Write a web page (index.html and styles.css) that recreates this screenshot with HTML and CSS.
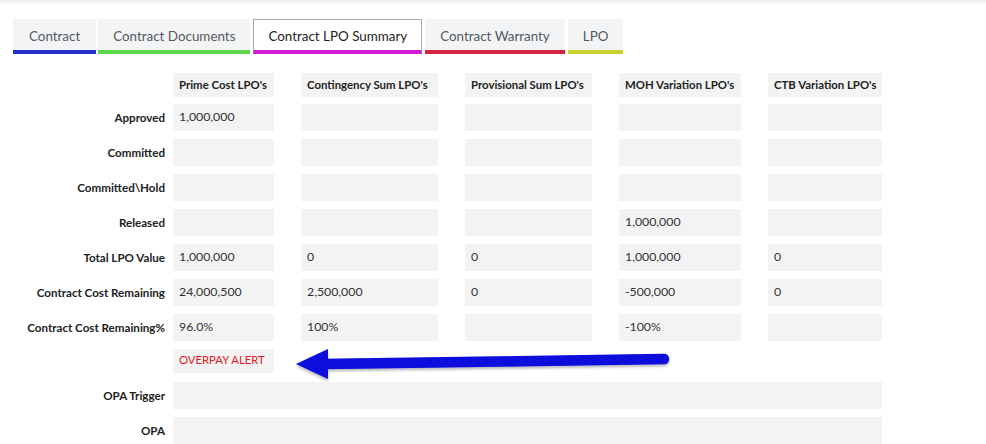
FILE: index.html
```html
<!DOCTYPE html>
<html>
<head>
<meta charset="utf-8">
<link rel="stylesheet" href="styles.css">
</head>
<body>
<div class="topbar"></div>
<nav class="tabs">
  <div class="tab c-blue first">Contract</div>
  <div class="tab c-green">Contract Documents</div>
  <div class="tab active c-magenta">Contract LPO Summary</div>
  <div class="tab c-red">Contract Warranty</div>
  <div class="tab c-yellow">LPO</div>
</nav>

<section class="summary">
  <div class="row head">
    <div class="label"></div>
    <div class="cells">
      <div class="cell h">Prime Cost LPO's</div>
      <div class="cell h">Contingency Sum LPO's</div>
      <div class="cell h">Provisional Sum LPO's</div>
      <div class="cell h">MOH Variation LPO's</div>
      <div class="cell h">CTB Variation LPO's</div>
    </div>
  </div>
  <div class="row">
    <div class="label">Approved</div>
    <div class="cells">
      <div class="cell">1,000,000</div><div class="cell"></div><div class="cell"></div><div class="cell"></div><div class="cell"></div>
    </div>
  </div>
  <div class="row">
    <div class="label">Committed</div>
    <div class="cells">
      <div class="cell"></div><div class="cell"></div><div class="cell"></div><div class="cell"></div><div class="cell"></div>
    </div>
  </div>
  <div class="row">
    <div class="label">Committed\Hold</div>
    <div class="cells">
      <div class="cell"></div><div class="cell"></div><div class="cell"></div><div class="cell"></div><div class="cell"></div>
    </div>
  </div>
  <div class="row">
    <div class="label">Released</div>
    <div class="cells">
      <div class="cell"></div><div class="cell"></div><div class="cell"></div><div class="cell">1,000,000</div><div class="cell"></div>
    </div>
  </div>
  <div class="row">
    <div class="label">Total LPO Value</div>
    <div class="cells">
      <div class="cell">1,000,000</div><div class="cell">0</div><div class="cell">0</div><div class="cell">1,000,000</div><div class="cell">0</div>
    </div>
  </div>
  <div class="row">
    <div class="label">Contract Cost Remaining</div>
    <div class="cells">
      <div class="cell">24,000,500</div><div class="cell">2,500,000</div><div class="cell">0</div><div class="cell">-500,000</div><div class="cell">0</div>
    </div>
  </div>
  <div class="row">
    <div class="label">Contract Cost Remaining%</div>
    <div class="cells">
      <div class="cell">96.0%</div><div class="cell">100%</div><div class="cell"></div><div class="cell">-100%</div><div class="cell"></div>
    </div>
  </div>
  <div class="row alert-row">
    <div class="label"></div>
    <div class="cells">
      <div class="cell alert">OVERPAY ALERT</div>
    </div>
  </div>
  <div class="row">
    <div class="label">OPA Trigger</div>
    <div class="cells">
      <div class="cell wide"></div>
    </div>
  </div>
  <div class="row">
    <div class="label">OPA</div>
    <div class="cells">
      <div class="cell wide"></div>
    </div>
  </div>

  <svg class="arrow" width="400" height="50" viewBox="0 0 400 50">
    <defs>
      <filter id="sh" x="-10%" y="-50%" width="120%" height="200%">
        <feDropShadow dx="0" dy="2" stdDeviation="1.5" flood-color="#000" flood-opacity="0.3"/>
      </filter>
    </defs>
    <g filter="url(#sh)">
      <line x1="364" y1="21" x2="24" y2="26" stroke="#0808dc" stroke-width="10.5" stroke-linecap="round"/>
      <polygon points="-4,26 28,11 28,41" fill="#0808dc"/>
    </g>
  </svg>
</section>
</body>
</html>
```

FILE: styles.css
```css
html, body {
  margin: 0;
  padding: 0;
  background: #ffffff;
  font-family: Lato, "Open Sans", sans-serif;
  color: #333333;
}

.topbar {
  height: 4px;
  background: linear-gradient(#eeeeee, #fafafa);
}

.tabs {
  display: flex;
  align-items: flex-end;
  gap: 3px;
  margin: 15px 0 0 13px;
}

.tab {
  box-sizing: border-box;
  height: 35px;
  padding: 3px 15px 0;
  display: flex;
  align-items: center;
  font-size: 13.4px;
  color: #555a60;
  background: #f3f4f6;
  border-bottom: 4px solid transparent;
}

.tab.first {
  margin-right: -1px;
  padding: 3px 16px 0;
}

.tab.active {
  background: #ffffff;
  color: #222222;
  border: 1px solid #a8a8a8;
  border-bottom: 4px solid #d41bd4;
  padding: 2px 14px 0;
}

.c-blue { border-bottom-color: #2331c6; }
.c-green { border-bottom-color: #5cd64a; }
.c-magenta { border-bottom-color: #d41bd4; }
.c-red { border-bottom-color: #d52240; }
.c-yellow { border-bottom-color: #c8d22a; }

.summary {
  position: relative;
  margin-top: 19px;
  display: flex;
  flex-direction: column;
  gap: 8px;
}

.row {
  display: flex;
  align-items: center;
  height: 27px;
}

.row.head {
  height: 24px;
  margin-bottom: -1px;
}

.row.alert-row {
  height: 24px;
  margin-bottom: 1px;
}

.label {
  width: 165px;
  flex: none;
  text-align: right;
  font-size: 11.6px;
  font-weight: 700;
  color: #222222;
}

.cells {
  margin-left: 8px;
  display: grid;
  grid-template-columns: 101px 137px 127px 122px 114px;
  column-gap: 27px;
  height: 100%;
}

.cell {
  background: #f3f3f3;
  font-size: 12.3px;
  padding: 0 6px;
  display: flex;
  align-items: center;
  padding-bottom: 3px;
  box-sizing: border-box;
  height: 100%;
  white-space: nowrap;
}

.cell.h {
  font-size: 11.4px;
  font-weight: 700;
  color: #222222;
  padding-bottom: 2px;
}

.cell.alert {
  color: #e3191c;
  font-size: 11.3px;
}

.cell.wide {
  grid-column: 1 / -1;
}

.arrow {
  position: absolute;
  left: 300px;
  top: 265px;
  overflow: visible;
}
```
